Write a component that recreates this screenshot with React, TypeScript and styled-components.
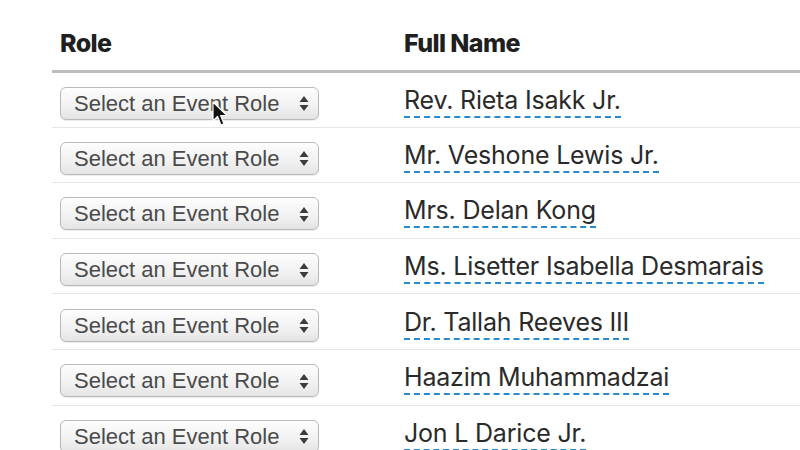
import styled, { createGlobalStyle } from 'styled-components'

const GlobalStyle = createGlobalStyle`
  html, body {
    margin: 0;
    padding: 0;
    background: #ffffff;
  }
  body {
    font-family: 'Liberation Sans', Arial, sans-serif;
    overflow: hidden;
  }
`

const Page = styled.div`
  width: 800px;
  height: 450px;
  padding-left: 52px;
  box-sizing: border-box;
  overflow: hidden;
  position: relative;
`

const Table = styled.table`
  border-collapse: collapse;
  width: 760px;
`

const HeadCell = styled.th<{ $w?: number }>`
  text-align: left;
  font-family: Inter, 'Open Sans', sans-serif;
  font-weight: 800;
  font-size: 25px;
  letter-spacing: -0.6px;
  color: #1f1f1f;
  padding: 29px 8px 13px 8px;
  line-height: 28px;
  border-bottom: 3px solid #bdbdbd;
  width: ${(p) => (p.$w ? `${p.$w}px` : 'auto')};
`

const Row = styled.tr`
  height: 55.6px;
  border-bottom: 1px solid #e6e6e6;
`

const Cell = styled.td`
  padding: 0 8px;
  vertical-align: middle;
`

const SelectBox = styled.div`
  box-sizing: border-box;
  width: 259px;
  height: 33px;
  margin-top: 7px;
  border: 1px solid #b9b9b9;
  border-radius: 6px;
  background: linear-gradient(#fdfdfd, #f1f1f1 60%, #e4e4e4);
  box-shadow: inset 0 1px 0 #ffffff, 0 1px 1px rgba(0, 0, 0, 0.08);
  display: flex;
  align-items: center;
  justify-content: space-between;
  padding: 1px 9px 0 13px;
  font-family: 'Liberation Sans', Arial, sans-serif;
  font-size: 22px;
  color: #4a4a4a;
`

const Arrows = styled.svg`
  width: 10px;
  height: 17px;
  flex: none;
`

const Name = styled.span`
  font-family: Inter, 'Open Sans', sans-serif;
  font-size: 25px;
  letter-spacing: -0.2px;
  color: #2a2a2a;
  padding-bottom: 1px;
  border-bottom: 2px dashed #2a8ad0;
  position: relative;
  top: 0px;
`

const Cursor = styled.svg`
  position: absolute;
  left: 212px;
  top: 101px;
  width: 18px;
  height: 28px;
`

const names = [
  'Rev. Rieta Isakk Jr.',
  'Mr. Veshone Lewis Jr.',
  'Mrs. Delan Kong',
  'Ms. Lisetter Isabella Desmarais',
  'Dr. Tallah Reeves III',
  'Haazim Muhammadzai',
  'Jon L Darice Jr.',
]

const App = () => {
  return (
    <Page>
      <GlobalStyle />
      <Table>
        <thead>
          <tr>
            <HeadCell $w={328}>Role</HeadCell>
            <HeadCell>Full Name</HeadCell>
          </tr>
        </thead>
        <tbody>
          {names.map((n) => (
            <Row key={n}>
              <Cell>
                <SelectBox>
                  Select an Event Role
                  <Arrows viewBox="0 0 10 17">
                    <path d="M5 1 L9.5 7 H0.5 Z" fill="#3c3c3c" />
                    <path d="M5 16 L9.5 10 H0.5 Z" fill="#3c3c3c" />
                  </Arrows>
                </SelectBox>
              </Cell>
              <Cell>
                <Name>{n}</Name>
              </Cell>
            </Row>
          ))}
        </tbody>
      </Table>
      <Cursor viewBox="0 0 18 28">
        <path
          d="M1 1 L1 20 L5.5 15.5 L9 24 L12 22.7 L8.6 14.5 L15 14.5 Z"
          fill="#111"
          stroke="#fff"
          strokeWidth="1.2"
          strokeLinejoin="round"
        />
      </Cursor>
    </Page>
  )
}

export default App
